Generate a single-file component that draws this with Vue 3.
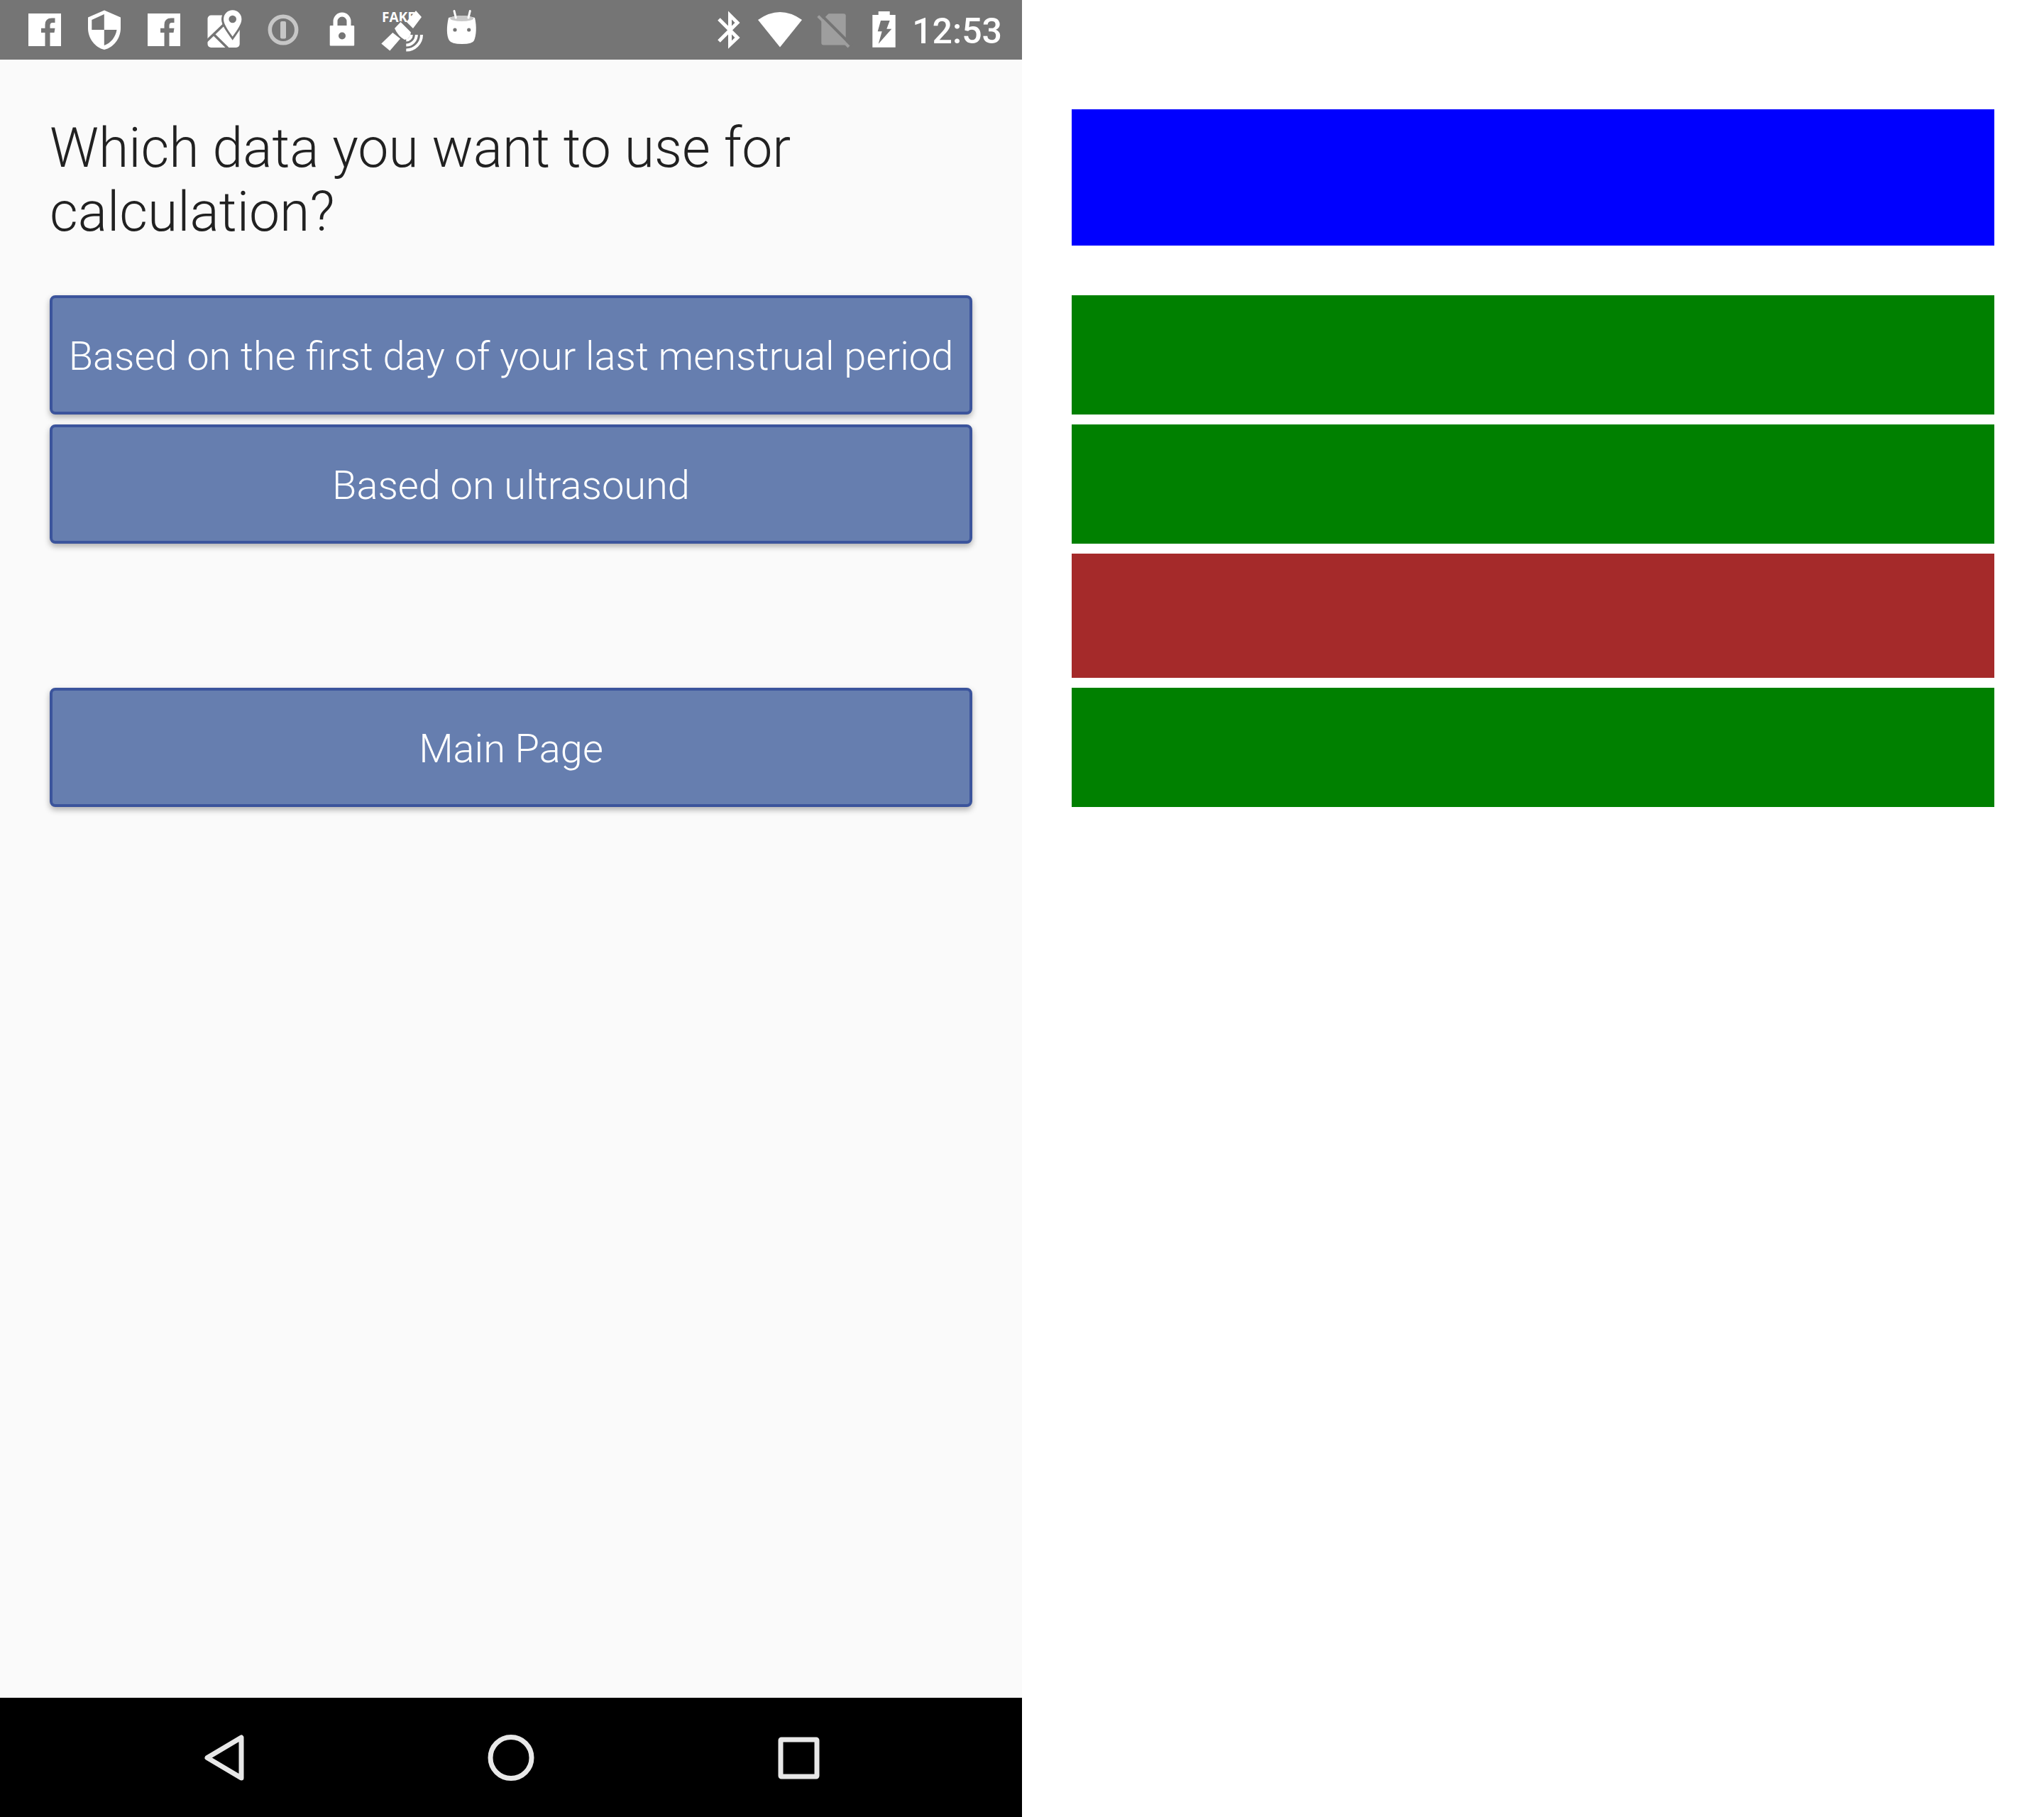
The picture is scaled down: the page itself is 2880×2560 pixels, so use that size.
<script setup>
const choices = ['Based on the first day of your last menstrual period', 'Based on ultrasound']
const blocks = ['title', 'action', 'action', 'spacer', 'action']
</script>

<template>
  <div class="page">
    <section class="phone">
      <header class="status">
        <svg class="note" viewBox="0 0 84 84" aria-hidden="true">
          <path fill="#fff" d="M19 19H65V65H49.5V46H55.5L56.5 39.7H49.5V36Q49.5 32 53 32H56.5V25.5H52Q42.5 25.5 42.5 35V39.7H37V46H42.5V65H19Z" />
        </svg>
        <svg class="note" viewBox="0 0 84 84" aria-hidden="true">
          <path fill="#fff" fill-rule="evenodd" d="M42 14.500L65 24.500V39.800C65 54 55.200 67 42 70C28.800 67 19 54 19 39.800V24.500ZM41.800 20L24.300 28V42H41.800ZM41.800 42V64C51 61 58 52 59.500 42Z" />
        </svg>
        <svg class="note" viewBox="0 0 84 84" aria-hidden="true">
          <path fill="#fff" d="M19 19H65V65H49.5V46H55.5L56.5 39.7H49.5V36Q49.5 32 53 32H56.5V25.5H52Q42.5 25.5 42.5 35V39.7H37V46H42.5V65H19Z" />
        </svg>
        <svg class="note" viewBox="0 0 84 84" aria-hidden="true">
          <rect x="19.500" y="21.500" width="45.200" height="45.500" rx="5" fill="#fff" />
          <path d="M18 58L43 34M28.700 49L48 68" stroke="#757575" stroke-width="3.500" fill="none" />
          <path d="M54.700 51.500C48 42 42 34 42 27A12.700 12.700 0 0 1 67.400 27C67.400 34 61.400 42 54.700 51.500Z" fill="#fff" stroke="#757575" stroke-width="6" paint-order="stroke" />
          <circle cx="54.700" cy="27" r="5.300" fill="#757575" />
        </svg>
        <svg class="note" viewBox="0 0 84 84" aria-hidden="true">
          <circle cx="42" cy="42" r="18.700" fill="none" stroke="#c6c6c6" stroke-width="5.500" />
          <rect x="38" y="30" width="8" height="24.500" rx="2" fill="#c6c6c6" />
        </svg>
        <svg class="note" viewBox="0 0 84 84" aria-hidden="true">
          <path d="M31.500 38V30A9.500 9.500 0 0 1 50.500 30V38" fill="none" stroke="#fff" stroke-width="6" />
          <rect x="23.700" y="36" width="34.500" height="28.500" rx="1" fill="#fff" />
          <circle cx="41" cy="50.500" r="5" fill="#757575" />
        </svg>
        <svg class="note" viewBox="0 0 84 84" aria-hidden="true">
          <text class="fake" x="13" y="31">FAKE</text>
          <path fill="#fff" d="M61 15L69 24L57 40L47.700 30.700ZM28.300 46L39 54.500L24.300 71.500L12.300 61.500Z" />
          <path fill="#fff" stroke="#757575" stroke-width="3" stroke-linejoin="round" paint-order="stroke" d="M39.500 31L31 40Q36 51 45 56Q53 55 54 45.500Z" />
          <path fill="none" stroke="#fff" stroke-width="4" d="M54.800 49A7.500 7.500 0 0 1 47.300 56.500M61.800 49A14.500 14.500 0 0 1 47.300 63.500M69 49A21.500 21.500 0 0 1 47.300 70.500" />
        </svg>
        <svg class="note" viewBox="0 0 84 84" aria-hidden="true">
          <path fill="#fff" d="M23 25Q42 19 60 25C63 38 62 50 59 57Q57 62 42 62Q27 62 24 57C20 50 20 38 23 25Z" />
          <ellipse cx="41.700" cy="26" rx="16.500" ry="4" fill="#c9c9c9" />
          <path d="M31 15.500L33.300 25M53.300 15.500L51 25" stroke="#fff" stroke-width="3" stroke-linecap="round" />
          <circle cx="32" cy="42" r="2.600" fill="#757575" />
          <circle cx="51.700" cy="42" r="2.600" fill="#757575" />
        </svg>

        <div class="system">
          <svg class="sys" viewBox="0 0 73 84" aria-hidden="true">
            <path fill="none" stroke="#fff" stroke-width="5" d="M23 27L49 53L38.500 63V21.500L49 32L23 58" />
          </svg>
          <svg class="sys" viewBox="0 0 73 84" aria-hidden="true">
            <path fill="#fff" d="M5 28Q36 6 67 28L36 66.500Z" />
          </svg>
          <svg class="sys" viewBox="0 0 73 84" aria-hidden="true">
            <path fill="#9e9e9e" d="M31.500 19.300H52.700Q55.700 19.300 55.700 22.300V63.500H24.300Q21.300 63.500 21.300 60.500V29.500Z" />
            <path stroke="#757575" stroke-width="4" d="M19 19L64 64" />
            <path stroke="#9e9e9e" stroke-width="4" d="M16.700 22.700L60 66" />
          </svg>
          <svg class="sys" viewBox="0 0 73 84" aria-hidden="true">
            <path fill="#fff" fill-rule="evenodd" d="M28.700 16H44.700V21H52.700V66.700H20.300V21H28.700ZM32 29L27.700 44.300H33.700L28.700 61.700L47.300 40.700H40.300L44.700 29Z" />
          </svg>
          <time class="clock">12:53</time>
        </div>
      </header>

      <main class="content">
        <h1 class="question">Which data you want to use for calculation?</h1>
        <button v-for="c in choices" :key="c" type="button" class="choice">{{ c }}</button>
        <div class="space"></div>
        <button type="button" class="choice">Main Page</button>
      </main>

      <nav class="nav">
        <button type="button" class="key" aria-label="Back">
          <svg viewBox="0 0 84 84"><path d="M67 14V71L19 42.500Z" /></svg>
        </button>
        <button type="button" class="key" aria-label="Home">
          <svg viewBox="0 0 84 84"><circle cx="42" cy="42.500" r="29" /></svg>
        </button>
        <button type="button" class="key" aria-label="Overview">
          <svg viewBox="0 0 84 84"><rect x="17" y="17" width="51" height="52" rx="1" /></svg>
        </button>
      </nav>
    </section>

    <section class="wireframe">
      <div v-for="(b, i) in blocks" :key="i" class="block" :class="b"></div>
    </section>
  </div>
</template>

<style>
body {
  margin: 0;
  background: #fff;
}
</style>

<style scoped>
.page {
  display: grid;
  grid-template-columns: 1fr 1fr;
  min-height: 100vh;
  font-family: Roboto, sans-serif;
}
.phone {
  display: flex;
  flex-direction: column;
  background: #fafafa;
}
.status {
  display: flex;
  align-items: center;
  height: 84px;
  padding: 0 28px 0 21px;
  background: #757575;
}
.note {
  width: 84px;
  height: 84px;
}
.fake {
  font: 700 19px "Open Sans", sans-serif;
  fill: #fff;
}
.system {
  display: flex;
  align-items: center;
  margin-left: auto;
}
.sys {
  width: 73px;
  height: 84px;
}
.clock {
  padding: 4px 0 0 3px;
  font-size: 50px;
  font-weight: 500;
  line-height: 60px;
  color: #fff;
}
.content {
  display: flex;
  flex: 1;
  flex-direction: column;
  gap: 14px;
  padding: 70px;
}
.question {
  margin: 0 0 56px;
  padding: 10px 0 2px;
  font-size: 77px;
  font-weight: 300;
  line-height: 90px;
  color: #212121;
}
.choice {
  height: 168px;
  padding: 4px 0 0;
  border: 4px solid #3b549c;
  border-radius: 8px;
  background: #667eaf;
  box-shadow: 0 4px 8px rgba(0, 0, 0, 0.3);
  font-family: inherit;
  font-size: 56px;
  font-weight: 300;
  color: #fff;
}
.space {
  height: 175px;
}
.nav {
  display: grid;
  grid-template-columns: repeat(3, 1fr);
  height: 168px;
  padding: 0 112px;
  background: #000;
}
.key {
  display: flex;
  align-items: center;
  justify-content: center;
  padding: 0;
  border: 0;
  background: none;
}
.key svg {
  width: 84px;
  height: 84px;
  fill: none;
  stroke: #e8e8e8;
  stroke-width: 7;
  stroke-linejoin: round;
}
.wireframe {
  display: flex;
  flex-direction: column;
  gap: 14px;
  padding: 154px 70px 70px;
}
.title {
  height: 192px;
  margin-bottom: 56px;
  background: #00f;
}
.action {
  height: 168px;
  background: #008000;
}
.spacer {
  height: 175px;
  background: #a52a2a;
}
</style>
